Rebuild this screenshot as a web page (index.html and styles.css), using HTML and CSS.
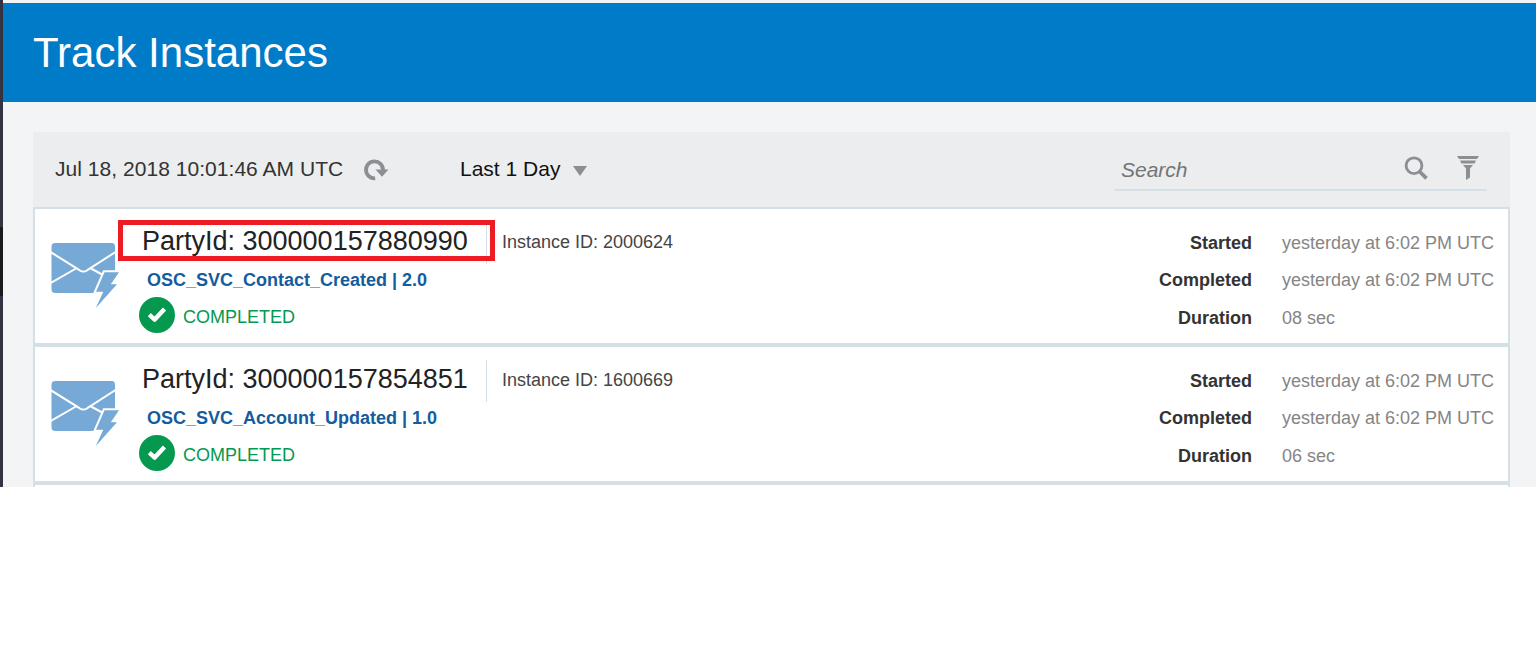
FILE: index.html
```html
<!DOCTYPE html>
<html lang="en">
<head>
<meta charset="utf-8">
<title>Track Instances</title>
<link rel="stylesheet" href="styles.css">
</head>
<body>
<svg class="defs" width="0" height="0">
  <symbol id="event" viewBox="0 0 70 68">
    <path fill="#76a9d6" d="M5 1H62Q65 1 65 4.500V30H54L45 51H5Q1.500 51 1.500 47V5Q1.500 1 5 1Z"/>
    <path fill="none" stroke="#fff" stroke-width="2" d="M0 9.700L29.500 28.200Q33.300 31 37.300 28.200L67 9M0 41.500L26 26.500M41 26.500L54 33.500"/>
    <path fill="#76a9d6" stroke="#fff" stroke-width="4" paint-order="stroke" d="M54.500 30.300H69L60.800 42.300H67L45.800 66L53.300 49.800H46Z"/>
  </symbol>
  <symbol id="done" viewBox="0 0 36 36">
    <circle cx="18" cy="18" r="18" fill="#04994f"/>
    <path fill="none" stroke="#fff" stroke-width="4.400" stroke-linejoin="round" d="M10.300 17.700L15.700 22.600L25.500 12"/>
  </symbol>
</svg>
<div class="window">
  <div class="edge"><div class="edge-active"></div></div>
  <main class="page">
    <header class="header"><h1>Track Instances</h1></header>
    <section class="panel">
      <div class="toolbar">
        <span class="time">Jul 18, 2018 10:01:46 AM UTC</span>
        <svg class="refresh" width="26" height="24" viewBox="0 0 26 24"><path d="M12.200 20.300A8.500 8.500 0 1 1 20 12" fill="none" stroke="#8b8f93" stroke-width="3.800"/><path d="M12.500 11.500H25.500L19 18.700Z" fill="#8b8f93"/></svg>
        <span class="range">Last 1 Day</span>
        <svg class="caret" width="14" height="10" viewBox="0 0 14 10"><path d="M0 0H14L7 10Z" fill="#8b8f93"/></svg>
        <div class="search">
          <span class="placeholder">Search</span>
          <svg class="magnifier" width="24" height="26" viewBox="0 0 24 26"><circle cx="10" cy="9.700" r="7.900" fill="none" stroke="#8b8f93" stroke-width="2.800"/><path d="M15 15L22.500 22.300" stroke="#8b8f93" stroke-width="3.800"/></svg>
          <svg class="filter" width="22" height="24" viewBox="0 0 22 24"><path fill="#8b8f93" d="M0 0H22L20 3H2ZM3 4.500H19L17.500 7.500H4.500ZM6 9H16L13 12.500V21.500L9 24V12.500Z"/></svg>
        </div>
      </div>
      <article class="item">
        <svg class="event" width="70" height="68"><use href="#event"/></svg>
        <div class="info">
          <div class="title-row"><h2 class="title marked">PartyId: 300000157880990</h2><span class="instance">Instance ID: 2000624</span></div>
          <div class="flow">OSC_SVC_Contact_Created | 2.0</div>
          <div class="status"><svg width="36" height="36"><use href="#done"/></svg><span>COMPLETED</span></div>
        </div>
        <dl class="times"><dt>Started</dt><dd>yesterday at 6:02 PM UTC</dd><dt>Completed</dt><dd>yesterday at 6:02 PM UTC</dd><dt>Duration</dt><dd>08 sec</dd></dl>
      </article>
      <article class="item">
        <svg class="event" width="70" height="68"><use href="#event"/></svg>
        <div class="info">
          <div class="title-row"><h2 class="title">PartyId: 300000157854851</h2><span class="instance">Instance ID: 1600669</span></div>
          <div class="flow">OSC_SVC_Account_Updated | 1.0</div>
          <div class="status"><svg width="36" height="36"><use href="#done"/></svg><span>COMPLETED</span></div>
        </div>
        <dl class="times"><dt>Started</dt><dd>yesterday at 6:02 PM UTC</dd><dt>Completed</dt><dd>yesterday at 6:02 PM UTC</dd><dt>Duration</dt><dd>06 sec</dd></dl>
      </article>
      <div class="next-item"></div>
    </section>
  </main>
</div>
</body>
</html>
```
FILE: styles.css
```css
*, *::after { box-sizing: border-box; }
body { margin: 0; background: #fff; font-family: "Liberation Sans", Arial, sans-serif; overflow: hidden; }
h1, h2, dl, dd { margin: 0; font-weight: normal; }
svg { display: block; flex: none; }
.defs { position: absolute; }
.window { display: flex; height: 487px; overflow: hidden; }
.edge { width: 3px; background: #333343; padding-top: 227px; }
.edge-active { height: 69px; background: #19191d; }
.page { flex: 1; background: #f3f4f6; padding-top: 3px; }
.header { height: 99px; background: #007bc8; padding: 25px 0 0 30px; }
.header h1 { color: #fff; font-size: 42px; line-height: 50px; }
.panel { margin: 30px 26px 0 30px; }
.toolbar { display: flex; height: 75px; background: #ebedee; padding-left: 22px; font-size: 21px; line-height: 24px; }
.time { width: 308px; margin-top: 25px; color: #333; letter-spacing: .04px; }
.refresh { margin-top: 26px; }
.range { margin: 25px 0 0 71px; width: 101px; color: #111; white-space: nowrap; }
.caret { margin: 34px 0 0 12px; }
.search { display: flex; width: 373px; height: 59px; margin: 0 23px 0 auto; border-bottom: 2px solid #d5dfe6; border-radius: 3px; padding-left: 7px; }
.placeholder { margin-top: 26px; width: 283px; color: #757575; font-style: italic; }
.magnifier { margin-top: 24px; }
.filter { margin: 24px 0 0 29px; }
.item { display: flex; height: 138px; background: #fff; border: 2px solid #d5dfe6; padding-left: 15px; }
.event { margin-top: 33px; }
.info { margin-left: 15px; padding-top: 13px; }
.title-row { display: flex; height: 42px; }
.title { position: relative; width: 352px; padding: 3px 0 0 7px; border-right: 1px solid #d5dfe6; font-size: 27px; line-height: 32px; color: #222; white-space: nowrap; }
.marked::after { content: ""; position: absolute; left: -17px; top: -2px; width: 377px; height: 41px; border: 5px solid #ed1c24; }
.instance { margin: 10px 0 0 15px; font-size: 18px; line-height: 20px; color: #444; }
.flow { margin: 6px 0 0 12px; font-size: 18px; line-height: 20px; font-weight: bold; color: #145c9e; }
.status { display: flex; align-items: center; gap: 8px; margin: 7px 0 0 4px; font-size: 18px; line-height: 20px; color: #04994f; }
.status span { padding-top: 4px; }
.times { margin: 24px 14px 0 auto; display: grid; grid-template-columns: 94px 212px; column-gap: 30px; grid-template-rows: 37px 38px 37px; font-size: 18px; line-height: 20px; white-space: nowrap; }
.times dt { text-align: right; font-weight: bold; color: #333; }
.times dd { color: #858585; }
.next-item { height: 20px; border: 2px solid #d5dfe6; background: #fff; }
```
